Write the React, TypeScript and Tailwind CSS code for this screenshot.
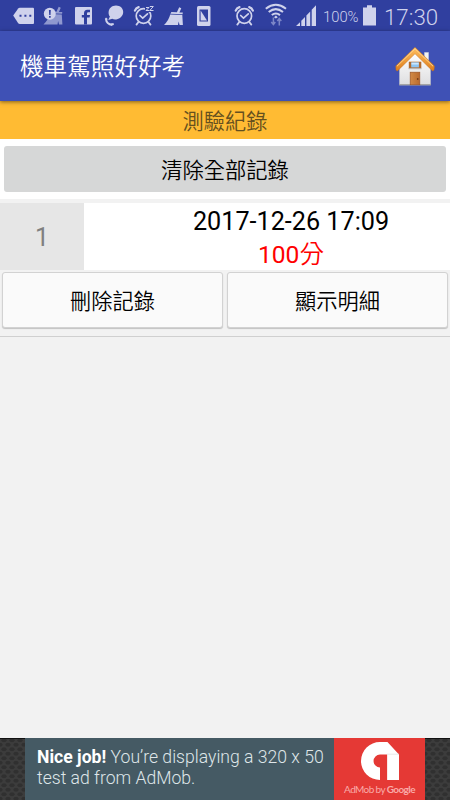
import type { ReactNode } from "react";

const LIGHT = "#cfd2ec";
const DARK = "#303f9f";

// Status bar icons share one 31px tall coordinate strip, each one shows its own slice
function StatusIcon({ x, width, children }: { x: number; width: number; children: ReactNode }) {
  return (
    <svg width={width} height={31} viewBox={`${x} 0 ${width} 31`} className="shrink-0" fill="none">
      {children}
    </svg>
  );
}

function AlarmFace({ cx }: { cx: number }) {
  return (
    <g transform={`translate(${cx} 16)`} stroke={LIGHT} strokeLinecap="round">
      <circle r="7.3" strokeWidth="1.7" />
      <path d="M-3.6-.5-.8 2.2 4-2.2" strokeWidth="1.7" />
      <path d="M-5.2 6.2-7 8.6M5.2 6.2 7 8.6" strokeWidth="1.8" />
      <path d="M-8.6-5.4Q-7.6-8-4.8-8.9" strokeWidth="2.2" />
    </g>
  );
}

function Broom() {
  return (
    <>
      <path d="M179.2 7.3 181.3 8.2 179.4 12.4 182.8 12.6 182.6 14.2 170.4 13.8 171.4 12 176.9 12.2Z" />
      <path d="M170.2 14.6 182.3 15 182.9 25 179.6 25 178.6 21.5 178 25 164 25Q168.8 20.5 170.2 14.6Z" />
    </>
  );
}

function StatusBar() {
  return (
    <div className="flex h-[31px] shrink-0 items-center overflow-hidden bg-[#303f9f] text-[#cfd2ec]">
      <StatusIcon x={0} width={40}>
        <path d="M13.2 15.5 18.2 8.6Q18.8 7.8 19.8 7.8H33Q34 7.8 34 8.8V23Q34 24 33 24H19.8Q18.8 24 18.2 23.2Z" fill={LIGHT} />
        <path d="M19.5 14.7h2v2h-2zM24.4 14.7h2v2h-2zM29.3 14.7h2v2h-2z" fill={DARK} />
      </StatusIcon>
      <StatusIcon x={40} width={30}>
        <g fill="#8f98cf" transform="translate(-120.5 -.5)">
          <Broom />
        </g>
        <circle cx="49.8" cy="13.8" r="6" fill={LIGHT} />
        <path d="M48.9 10h1.9l-.3 5h-1.3zM49 16h1.7v1.7H49z" fill={DARK} />
      </StatusIcon>
      <StatusIcon x={70} width={30}>
        <rect x="75" y="7" width="17" height="17.5" rx="1" fill={LIGHT} />
        <path d="M84 24.5V17.6H81.8V15H84V13.2Q84 9.7 87.4 9.7H90V12.3H88.2Q87 12.3 87 13.5V15H90L89.6 17.6H87V24.5Z" fill={DARK} />
      </StatusIcon>
      <StatusIcon x={100} width={30}>
        <path d="M116 5.6c4.2 0 7.2 2.8 7.2 6.4s-2.6 6.3-6.1 7.2c-2 .5-3.6.2-4.8-.4L108.3 20l1.6-3.4c-1-1.3-1.4-2.8-1.3-4.4.2-3.8 3.3-6.6 7.4-6.6z" fill={LIGHT} />
        <path d="M106 19.2Q106.5 24.3 112.3 25" stroke={LIGHT} strokeWidth="2" />
        <path d="M105.6 19.8 106.9 18.2M111 24.5 113.7 24" stroke={LIGHT} strokeWidth="2.2" />
      </StatusIcon>
      <StatusIcon x={130} width={29}>
        <AlarmFace cx={143.5} />
        <path d="M145 5H154V12H145Z" fill={DARK} />
        <path d="M146 7.5H149L146 10.5H149.3M149.8 6.5H153.3L149.8 10.5H153.5" stroke={LIGHT} strokeWidth="1" />
      </StatusIcon>
      <StatusIcon x={159} width={31}>
        <g fill={LIGHT}>
          <Broom />
        </g>
      </StatusIcon>
      <StatusIcon x={190} width={38}>
        <rect x="197" y="6" width="13.5" height="20" rx="1.5" fill={LIGHT} />
        <path d="M199.5 9.5H208V21.5H199.5Z" fill={DARK} />
        <path d="M200.6 10.5 207 20.4H200.6Z" fill={LIGHT} />
      </StatusIcon>
      <StatusIcon x={228} width={32}>
        <AlarmFace cx={244.3} />
        <path d="M249.2 7.1Q251.9 8 252.9 10.6" stroke={LIGHT} strokeWidth="2.2" strokeLinecap="round" />
      </StatusIcon>
      <StatusIcon x={260} width={32}>
        <path d="M265.8 8.7Q275.8.8 286 8.7M268.7 12Q275.8 6.2 283 12M271.8 15.1Q275.8 11.8 280 15.1" stroke={LIGHT} strokeWidth="2" />
        <path d="M274 17.2 275.9 15.6 277.8 17.2 275.9 18.5Z" fill={LIGHT} />
        <path d="M273.4 17.5V24M271.3 22 273.4 24.5 275.3 22M279.3 25.5V19M277.3 21 279.3 18.5 281.3 21" stroke="#7c86c7" strokeWidth="1.5" />
      </StatusIcon>
      <StatusIcon x={292} width={31}>
        <path d="M296 26 300 22.2V26ZM301.3 20.8 305 17V26H301.3ZM306.4 15.5 310.2 11.5V26H306.4ZM311.7 9.8 316 5.2V26H311.7Z" fill={LIGHT} />
      </StatusIcon>
      <span className="mt-[3px] w-[37px] shrink-0 text-[14.8px] font-[350] leading-none">100%</span>
      <StatusIcon x={360} width={24}>
        <path d="M367 5.3H372V7.5H376V25.5H363V7.5H367Z" fill={LIGHT} />
      </StatusIcon>
      <span className="mt-[4px] shrink-0 text-[22.3px] font-[350] leading-none">17:30</span>
    </div>
  );
}

function HomeIcon() {
  return (
    <svg width="40" height="41" viewBox="395 46 40 41" className="shrink-0">
      <defs>
        <linearGradient id="roof" x1="0" y1="0" x2="0" y2="1">
          <stop offset="0" stopColor="#ffc061" />
          <stop offset="1" stopColor="#dd7d1c" />
        </linearGradient>
        <linearGradient id="wall" x1="0" y1="0" x2="0" y2="1">
          <stop offset="0" stopColor="#ffffff" />
          <stop offset="1" stopColor="#dedee0" />
        </linearGradient>
        <linearGradient id="door" x1="0" y1="0" x2="1" y2="0">
          <stop offset="0" stopColor="#d18a47" />
          <stop offset="1" stopColor="#b96a2d" />
        </linearGradient>
      </defs>
      <path d="M424.5 52.5H428.5V64L424.5 60Z" fill="#f1f1f3" stroke="#c8cbd6" strokeWidth=".6" />
      <path d="M399.5 68 415 52.5 430.5 68V85H399.5Z" fill="url(#wall)" stroke="#c4c4c8" strokeWidth=".5" />
      <path d="M399 84.7H431" stroke="#a0a0a0" strokeWidth="1.2" />
      <path d="M415 47.2 434.5 66 434 70.3 432.5 71 415 53.8 397.5 71 396 70.3 395.7 66Z" fill="url(#roof)" stroke="#bc6a18" strokeWidth=".4" />
      <path d="M397 66.2 415 48.8 433 66.2" fill="none" stroke="#ffd48d" strokeWidth="1" />
      <rect x="408.8" y="61.7" width="12.5" height="6.6" fill="#b36a2c" />
      <rect x="411.2" y="62.3" width="7.7" height="5.1" fill="#8ec5f2" />
      <path d="M411.5 62.8H418.7V64.5H411.5Z" fill="#cae7ff" />
      <path d="M408.5 68.7H421.5" stroke="#aaa" strokeWidth=".8" />
      <rect x="410.2" y="72.2" width="9.6" height="12.6" fill="url(#door)" stroke="#9c5526" strokeWidth=".7" />
      <circle cx="417.7" cy="79" r=".9" fill="#743d1b" />
    </svg>
  );
}

function AppBar() {
  return (
    <header className="z-10 flex h-[70px] shrink-0 items-center justify-between bg-[#3f51b5] pl-5 pr-[15px] shadow-[0_1px_4px_rgba(0,0,0,0.5)]">
      <h1 className="pt-[3px] text-[23.6px] font-[350] leading-none text-white">機車駕照好好考</h1>
      <HomeIcon />
    </header>
  );
}

function RecordButton({ label }: { label: string }) {
  return (
    <button className="flex h-[56px] flex-1 items-center justify-center rounded-[3px] border border-[#d2d2d2] bg-[#fafafa] pt-[4px] text-[21.2px] font-[350] leading-none text-black shadow-[0_1px_1px_rgba(0,0,0,0.2)]">
      {label}
    </button>
  );
}

function Mesh({ id }: { id: string }) {
  return (
    <svg width="25" height="62" className="shrink-0">
      <defs>
        <pattern id={id} width="8" height="9" patternUnits="userSpaceOnUse">
          <rect width="8" height="9" fill="#3c3c3c" />
          <ellipse cx="4" cy="2.2" rx="2.7" ry="2" fill="#303030" />
          <ellipse cx="0" cy="6.7" rx="2.7" ry="2" fill="#303030" />
          <ellipse cx="8" cy="6.7" rx="2.7" ry="2" fill="#303030" />
        </pattern>
      </defs>
      <rect width="25" height="62" fill={`url(#${id})`} />
      <rect width="25" height="1" fill="#111" />
    </svg>
  );
}

function AdBanner() {
  return (
    <div className="flex h-[62px] shrink-0 overflow-hidden">
      <Mesh id="meshLeft" />
      <div className="w-[309px] shrink-0 whitespace-nowrap bg-[#455a64] pl-3 pt-[9px] text-[17.6px] font-light leading-[21px] text-[#dfe6e9]">
        <p>
          <b className="font-bold text-white">Nice job!</b> You’re displaying a 320 x 50
        </p>
        <p>test ad from AdMob.</p>
      </div>
      <div className="flex w-[91px] shrink-0 flex-col items-center bg-[#e53935] pt-[4px]">
        <svg width="38" height="38" viewBox="0 0 112 112">
          <path d="M56 0H78L112 37V112H77V37H56A19 19 0 0 0 56 75V112A56 56 0 0 1 56 0Z" fill="#fff" />
          <path d="M77 36H112" stroke="#ddd" strokeWidth="2" />
        </svg>
        <span className="mt-[2px] whitespace-nowrap font-['Lato',sans-serif] text-[10px] leading-[14px] tracking-[-0.6px] text-[#f9aaa8]">
          AdMob by <span className="font-bold">Google</span>
        </span>
      </div>
      <Mesh id="meshRight" />
    </div>
  );
}

export default function App() {
  return (
    <div className="flex h-[800px] w-[450px] flex-col overflow-hidden bg-[#f2f2f2] font-['Roboto','Noto_Sans_CJK_TC',sans-serif]">
      <StatusBar />
      <AppBar />
      <div className="flex h-[38px] shrink-0 items-center justify-center bg-[#ffbb33] pt-[4px] text-[21.2px] font-[350] leading-none text-[#65501f]">
        測驗紀錄
      </div>
      <div className="h-[60px] shrink-0 bg-white px-1 pt-[7px]">
        <button className="flex h-[46px] w-full items-center justify-center rounded-[3px] bg-[#d6d7d7] pt-[4px] text-[21.3px] font-[350] leading-none text-black">
          清除全部記錄
        </button>
      </div>
      <div className="mt-1 flex h-[67px] shrink-0 bg-white">
        <div className="flex w-[84px] items-center justify-center bg-[#e6e6e6] pt-[2px] text-[25px] leading-none text-[#808080]">
          1
        </div>
        <div className="flex flex-1 flex-col items-center pl-[48px] pt-[2px] text-[25.2px] leading-[33px] text-black">
          <span>2017-12-26 17:09</span>
          <span className="text-[24.6px] text-[#ff0000]">
            100<span className="font-[350]">分</span>
          </span>
        </div>
      </div>
      <div className="flex h-[67px] shrink-0 gap-1 border-b border-[#d0d0d0] px-[2px] pt-[2px]">
        <RecordButton label="刪除記錄" />
        <RecordButton label="顯示明細" />
      </div>
      <div className="flex-1" />
      <AdBanner />
    </div>
  );
}
